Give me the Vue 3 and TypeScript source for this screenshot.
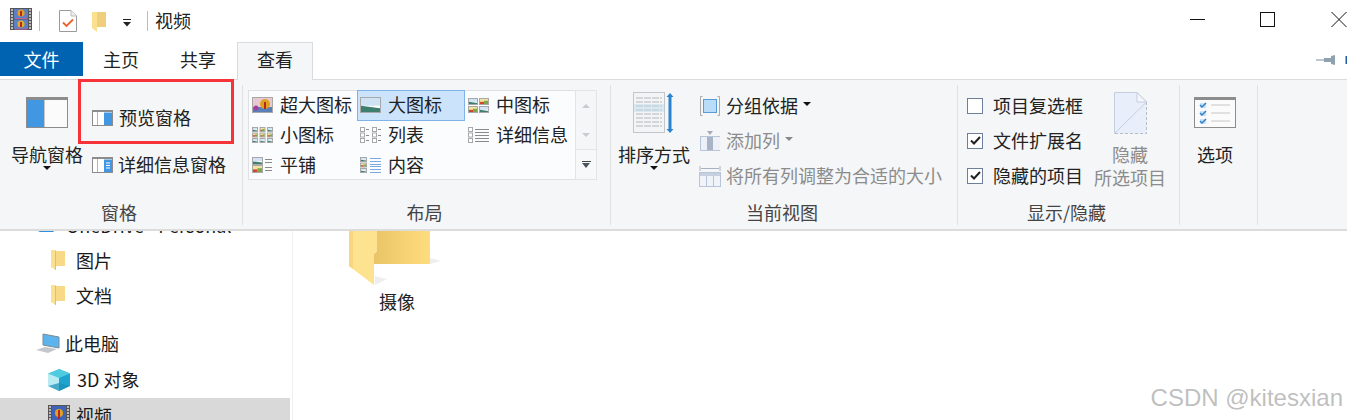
<script setup lang="ts">
// svg fragments, drawn in a 21x16 box unless noted
const pic = (x: number, y: number, w: number, h: number) =>
  `<rect x="${x + 0.5}" y="${y + 0.5}" width="${w - 1}" height="${h - 1}" fill="#fff" stroke="#a8a8a8"/>` +
  `<rect x="${x + 1}" y="${y + 1}" width="${w - 2}" height="${(h - 2) * 0.55}" fill="#cfe3f4"/>` +
  `<path d="M${x + 1} ${y + h * 0.55}L${x + w - 1} ${y + h * 0.7}V${y + h - 1}H${x + 1}Z" fill="#3f7f70"/>`;
const warm = (x: number, y: number, w: number, h: number) =>
  `<rect x="${x + 0.5}" y="${y + 0.5}" width="${w - 1}" height="${h - 1}" fill="#f1e3a0" stroke="#a8a8a8"/>` +
  `<rect x="${x + 1}" y="${y + h * 0.55}" width="${(w - 2) / 2}" height="${h * 0.45 - 1}" fill="#d2452f"/>` +
  `<rect x="${x + w / 2}" y="${y + h * 0.4}" width="${w / 2 - 1}" height="${h * 0.6 - 1}" fill="#7fa64a"/>`;
const lines = (x: number, ys: number[], w: number, c = "#8a8a8a") =>
  ys.map((y) => `<rect x="${x}" y="${y}" width="${w}" height="1" fill="${c}"/>`).join("");
const dots = (x: number) =>
  [0, 5.5, 11].map((y) => `<rect x="${x + 0.5}" y="${y + 0.5}" width="4" height="4" fill="#fff" stroke="#a8a8a8"/>`).join("");

const gallery = [
  {
    label: "超大图标",
    svg:
      '<rect x=".5" y=".5" width="20" height="15" fill="#e8c9d0" stroke="#a8a8a8"/><rect x="1" y="10" width="19" height="5" fill="#5a7fb8"/><circle cx="13" cy="7" r="5" fill="#e0a020"/><rect x="12" y="5" width="2" height="7" fill="#b8281e"/><circle cx="4" cy="11" r="2.5" fill="#a040a0"/>',
  },
  { label: "大图标", svg: pic(0, 0, 21, 16), active: true },
  { label: "中图标", svg: pic(0, 1, 10, 7) + warm(11, 1, 10, 7) + warm(0, 9, 10, 7) + pic(11, 9, 10, 7) },
  {
    label: "小图标",
    svg: [0, 7.5, 15]
      .map((x, i) => (i === 1 ? warm(x, 0, 6, 5) : pic(x, 0, 6, 5)) + warm(x, 5.5, 6, 5) + pic(x, 11, 6, 5))
      .join(""),
  },
  {
    label: "列表",
    svg: dots(0) + dots(12) + lines(6, [2, 8, 13], 3) + lines(18, [2, 8, 13], 3),
  },
  { label: "详细信息", svg: dots(0) + lines(7, [2, 5, 8, 11, 14], 14) },
  {
    label: "平铺",
    svg: pic(0, 0, 11, 8) + warm(0, 8, 11, 8) + lines(13, [2, 5, 10, 13], 7),
  },
  {
    label: "内容",
    svg:
      pic(0, 0, 7, 5) + warm(0, 5.5, 7, 5) + pic(0, 11, 7, 5) + lines(10, [1, 4, 7, 9, 12, 15], 11, "#7da7e0"),
  },
];

const sideRows = [
  { label: "OneDrive - Personal", indent: 36, gap: 8, kind: "cloud", partial: true },
  { label: "图片", indent: 51, gap: 11, kind: "folder" },
  { label: "文档", indent: 51, gap: 11, kind: "folder", spaced: true },
  { label: "此电脑", indent: 36, gap: 5, kind: "pc", pad: true },
  { label: "3D 对象", indent: 48, gap: 7, kind: "cube", pad: true },
  { label: "视频", indent: 48, gap: 6, kind: "film", selected: true },
];
</script>

<template>
  <div class="explorer">
    <div class="titlebar">
      <svg class="film" width="22" height="22" viewBox="0 0 22 22">
        <rect width="22" height="22" fill="#555" />
        <rect x="4" y="1" width="14" height="9.5" fill="#5d7fc4" />
        <rect x="4" y="11.5" width="14" height="9.5" fill="#5d7fc4" />
        <circle cx="11" cy="5" r="3.6" fill="#e0a020" />
        <circle cx="11" cy="16" r="3.6" fill="#d8b030" />
        <rect x="10" y="3" width="2" height="5" fill="#b8281e" />
        <rect x="10" y="14" width="2" height="5" fill="#b8281e" />
        <path d="M5 10.5h12M5 21h12" stroke="#c060a0" />
        <path d="M1 2h2M1 5h2M1 8h2M1 11h2M1 14h2M1 17h2M1 20h2M19 2h2M19 5h2M19 8h2M19 11h2M19 14h2M19 17h2M19 20h2" stroke="#ddd" stroke-width="1.4" />
      </svg>
      <span class="tsep first"></span>
      <svg class="qa-check" width="18" height="22" viewBox="0 0 18 22">
        <path d="M.5.5H12L17.5 6V21.5H.5Z" fill="#fff" stroke="#9a9a9a" />
        <path d="M12 .5V6h5.5" fill="#eee" stroke="#bbb" />
        <path d="M4 12.5l3.5 3.5L14 9.5" fill="none" stroke="#e8622c" stroke-width="1.8" />
      </svg>
      <svg class="qa-folder" width="15" height="21" viewBox="0 0 15 21">
        <path d="M4 1h10v15H4Z" fill="#efcf7c" />
        <path d="M0 1h5v20L0 17Z" fill="#fbe08f" />
      </svg>
      <svg class="qa-drop" width="10" height="8" viewBox="0 0 10 8">
        <rect x="1" y="0" width="8" height="1" fill="#222" />
        <path d="M1 3h8L5 7.5Z" fill="#222" />
      </svg>
      <span class="tsep second"></span>
      <span class="title">视频</span>
      <div class="winctl">
        <svg class="win-min" width="16" height="2" viewBox="0 0 16 2"><rect width="15" height="1" y="0" fill="#111" /></svg>
        <svg class="win-max" width="15" height="15" viewBox="0 0 15 15"><rect x=".5" y=".5" width="14" height="14" fill="none" stroke="#111" /></svg>
        <svg class="win-close" width="16" height="15" viewBox="0 0 16 15"><path d="M.5 0 15.5 15M15.5 0 .5 15" stroke="#111" /></svg>
      </div>
    </div>

    <div class="tabs">
      <span class="tab file">文件</span>
      <span class="tab">主页</span>
      <span class="tab share">共享</span>
      <span class="tab current">查看</span>
      <svg class="pin" width="31" height="10" viewBox="0 0 31 10">
        <path d="M0 5h9" stroke="#a9b4bc" stroke-width="1.5" />
        <path d="M8 3h7V1l4-1v10l-4-1V7H8Z" fill="#8fa2b0" />
        <rect x="29.5" y="1" width="1.5" height="8" fill="#1f5f9e" />
      </svg>
    </div>

    <div class="ribbon">
      <section class="group pane">
        <div class="group-body">
          <div class="large">
            <div class="large-icon">
              <svg class="nudge-15" width="42" height="31" viewBox="0 0 42 31">
                <rect x=".5" y=".5" width="41" height="30" fill="#fbfbfb" stroke="#8c8c8c" />
                <rect x="0" y="0" width="42" height="3" fill="#8c8c8c" />
                <rect x="1" y="3" width="17" height="27" fill="#4197e2" />
                <rect x="18" y="3" width="1" height="27" fill="#c7c7c7" />
              </svg>
            </div>
            <span>导航窗格</span>
            <i class="caret"></i>
          </div>
          <div class="small-col tall">
            <div class="small">
              <svg width="21" height="16" viewBox="0 0 21 16">
                <rect x=".5" y=".5" width="20" height="15" fill="#fff" stroke="#8c8c8c" />
                <rect x="0" y="0" width="21" height="2" fill="#8c8c8c" />
                <rect x="5" y="2" width="1" height="13" fill="#b5b5b5" />
                <rect x="12" y="2.5" width="8" height="12.5" fill="#4197e2" />
              </svg>
              <span>预览窗格</span>
            </div>
            <div class="small">
              <svg width="21" height="16" viewBox="0 0 21 16">
                <rect x=".5" y=".5" width="20" height="15" fill="#fff" stroke="#8c8c8c" />
                <rect x="0" y="0" width="21" height="2" fill="#8c8c8c" />
                <rect x="5" y="2" width="1" height="13" fill="#b5b5b5" />
                <rect x="12" y="2.5" width="8" height="12.5" fill="#4197e2" />
                <path d="M14 6h4M14 8.500h4M14 11h4" stroke="#fff" />
              </svg>
              <span class="tight">详细信息窗格</span>
            </div>
          </div>
        </div>
        <div class="group-label">窗格</div>
      </section>

      <section class="group layout">
        <div class="group-body">
          <div class="gallery">
            <div v-for="item in gallery" :key="item.label" class="cell" :class="{ active: item.active }">
              <svg width="21" height="16" viewBox="0 0 21 16" v-html="item.svg"></svg>
              <span>{{ item.label }}</span>
            </div>
          </div>
          <div class="spin">
            <div class="spin-cell"><i class="tri up"></i></div>
            <div class="spin-cell"><i class="tri down"></i></div>
            <div class="spin-cell more"><b></b><i class="tri dark"></i></div>
          </div>
        </div>
        <div class="group-label">布局</div>
      </section>

      <section class="group view">
        <div class="group-body">
          <div class="large">
            <div class="large-icon">
              <svg class="nudge-9" width="42" height="42" viewBox="0 0 42 42">
                <rect x=".5" y=".5" width="31" height="40" fill="#f2f4f5" stroke="#c2c6c8" />
                <path d="M3 6h26M3 10h26M3 14h26M3 18h26M3 22h26M3 26h26M3 30h26M3 34h26" stroke="#b4b8ba" stroke-dasharray="7 1" />
                <rect x="1" y="12" width="30" height="8" fill="#bcd9ee" opacity=".45" />
                <path d="M37 1l3.500 4h-2v32h2L37 41l-3.500-4h2V5h-2Z" fill="#2b83cf" />
              </svg>
            </div>
            <span>排序方式</span>
            <i class="caret"></i>
          </div>
          <div class="small-col short">
            <div class="small wide">
              <svg width="20" height="20" viewBox="0 0 20 20">
                <path d="M2.500.5h-2v19h2M17.500.5h2v19h-2" fill="none" stroke="#aaa" />
                <rect x="3.500" y="3.500" width="13" height="13" fill="#b9dcf8" stroke="#5b9bd5" />
              </svg>
              <span>分组依据</span>
              <i class="small-caret"></i>
            </div>
            <div class="small wide off">
              <svg width="20" height="20" viewBox="0 0 20 20">
                <rect x=".5" y="5.500" width="20" height="14" fill="#edf1f7" stroke="#b8c4d8" />
                <rect x="7" y="6" width="6" height="13" fill="#a8b3c8" />
                <path d="M7 0h6l-3 4Z" fill="#a8a8b8" />
              </svg>
              <span>添加列</span>
              <i class="small-caret grey"></i>
            </div>
            <div class="small wide off fit">
              <svg width="22" height="22" viewBox="0 0 22 22">
                <path d="M1 1v5M21 1v5M2 3.500h18" stroke="#a9b2c4" fill="none" />
                <rect x=".5" y="7.500" width="21" height="14" fill="#f0f3f8" stroke="#b8c4d8" />
                <rect x="1" y="8" width="20" height="3" fill="#c7d0e0" />
                <path d="M7.500 11v10M14.500 11v10" stroke="#b8c4d8" />
              </svg>
              <span>将所有列调整为合适的大小</span>
            </div>
          </div>
        </div>
        <div class="group-label">当前视图</div>
      </section>

      <section class="group show">
        <div class="group-body">
          <div class="small-col short checks">
            <label class="check"><i class="box"></i><span>项目复选框</span></label>
            <label class="check"><i class="box on"><svg width="11" height="9" viewBox="0 0 11 9"><path d="M1 4.500 4 7.500 10 1" fill="none" stroke="#222" stroke-width="2" /></svg></i><span>文件扩展名</span></label>
            <label class="check"><i class="box on"><svg width="11" height="9" viewBox="0 0 11 9"><path d="M1 4.500 4 7.500 10 1" fill="none" stroke="#222" stroke-width="2" /></svg></i><span>隐藏的项目</span></label>
          </div>
          <div class="large off hide">
            <div class="large-icon">
              <svg class="nudge-8" width="33" height="43" viewBox="0 0 33 43">
                <path d="M.5.500H23L32.500 10V41.500H.5Z" fill="#e8eefa" />
                <path d="M32.500 10V41.500H.5" fill="none" stroke="#b5bdcb" stroke-dasharray="3 2" />
                <path d="M.5 41.500V.5H23L32.500 10" fill="none" stroke="#c5cede" />
                <path d="M23 .5V10h9.500Z" fill="#f4f6fb" stroke="#c5cede" />
                <path d="M.5 41.500 32.500 10" stroke="#c5cede" />
              </svg>
            </div>
            <span>隐藏</span>
            <span>所选项目</span>
          </div>
        </div>
        <div class="group-label">显示/隐藏</div>
      </section>

      <section class="group options">
        <div class="group-body">
          <div class="large shift">
            <div class="large-icon">
              <svg class="nudge-15" width="42" height="31" viewBox="0 0 42 31">
                <rect x=".5" y=".5" width="41" height="30" fill="#fbfbfb" stroke="#8c8c8c" />
                <rect width="42" height="3" fill="#8c8c8c" />
                <rect x="6" y="6" width="6" height="5" fill="#cfe2f5" />
                <rect x="6" y="14" width="6" height="5" fill="#cfe2f5" />
                <rect x="6" y="22" width="6" height="5" fill="#cfe2f5" />
                <path d="M6 8l2 2 4-4M6 16l2 2 4-4M6 24l2 2 4-4" fill="none" stroke="#2b83cf" stroke-width="1.5" />
                <path d="M17 8h19M17 16h19M17 24h19" stroke="#c6c6c6" />
              </svg>
            </div>
            <span>选项</span>
          </div>
        </div>
      </section>
    </div>

    <div class="main">
      <nav class="sidebar">
        <div
          v-for="row in sideRows"
          :key="row.label"
          class="side-row"
          :class="{ partial: row.partial, selected: row.selected, spaced: row.spaced, pad: row.pad }"
          :style="{ paddingLeft: row.indent + 'px', gap: row.gap + 'px' }"
        >
          <svg v-if="row.kind === 'folder'" width="14" height="21" viewBox="0 0 14 21">
            <path d="M4 1h10v15H4Z" fill="#f8d988" />
            <path d="M0 0h5v20L0 17Z" fill="#fbe08f" />
            <path d="M4 1h1v19H4Z" fill="#e6bf60" />
          </svg>
          <svg v-else-if="row.kind === 'cloud'" width="22" height="16" viewBox="0 0 22 16">
            <path d="M5 14a4 4 0 0 1 0-8 6 6 0 0 1 11-1 5 5 0 0 1 1 9Z" fill="#2f8fdc" />
          </svg>
          <svg v-else-if="row.kind === 'pc'" width="24" height="21" viewBox="0 0 24 21">
            <path d="M7 1 23 4V15L7 12Z" fill="#5cb3ee" stroke="#7b8a96" />
            <path d="M0 17l9-3 12 2-9 4Z" fill="#c4c8cc" />
          </svg>
          <svg v-else-if="row.kind === 'cube'" width="22" height="22" viewBox="0 0 22 22">
            <path d="M11 0 22 4.500V17L11 22Z" fill="#1fa4cf" />
            <path d="M11 0 0 4.500V17L11 22Z" fill="#b8ecf2" />
            <path d="M0 4.500 11 9 22 4.500 11 0Z" fill="#4fcbe0" />
            <path d="M0 17 11 14 22 17 11 22Z" fill="#178fb8" opacity=".7" />
          </svg>
          <svg v-else-if="row.kind === 'film'" width="22" height="22" viewBox="0 0 22 22">
            <rect width="22" height="22" fill="#555" />
            <rect x="4" y="1" width="14" height="20" fill="#3f63b8" />
            <circle cx="11" cy="8" r="4" fill="#e0a020" />
            <rect x="10" y="5" width="2" height="9" fill="#b8281e" />
            <path d="M1 2h2M1 5h2M1 8h2M1 11h2M1 14h2M1 17h2M1 20h2M19 2h2M19 5h2M19 8h2M19 11h2M19 14h2M19 17h2M19 20h2" stroke="#ddd" stroke-width="1.4" />
          </svg>
          <span>{{ row.label }}</span>
        </div>
      </nav>
      <div class="files">
        <div class="file-item">
          <svg width="96" height="55" viewBox="0 0 96 55">
            <defs>
              <linearGradient id="back" x1="0" x2="1" y1="0" y2="0">
                <stop offset="0" stop-color="#eac468" />
                <stop offset="1" stop-color="#fedd7e" />
              </linearGradient>
            </defs>
            <path d="M81 33l11-3-11-3ZM26 54l12-6-12-3Z" fill="#eeeeee" />
            <path d="M28 0H81V33H25V23L28 20Z" fill="url(#back)" />
            <path d="M0 0H28V20L25 23V54L0 35Z" fill="#fde28f" />
            <path d="M0 0H4V38L0 35Z" fill="#f8d67e" />
          </svg>
          <span>摄像</span>
        </div>
      </div>
    </div>

    <div class="highlight"></div>
    <div class="watermark">CSDN @kitesxian</div>
  </div>
</template>

<style scoped>
.explorer {
  position: relative;
  width: 1347px;
  height: 420px;
  overflow: hidden;
  background: #fff;
  color: #222;
  font-family: "Noto Sans CJK SC", "Liberation Sans", sans-serif;
  font-size: 18px;
  line-height: 22px;
}
i {
  font-style: normal;
  display: block;
}

.titlebar {
  display: flex;
  align-items: center;
  height: 42px;
  padding-left: 10px;
}
.film {
  margin-top: -4px;
}
.tsep {
  width: 1px;
  height: 20px;
  background: #bdbdbd;
}
.tsep.first {
  margin-left: 7px;
}
.qa-check {
  margin-left: 19px;
}
.qa-folder {
  margin-left: 15px;
}
.qa-drop {
  margin-left: 15px;
  margin-top: 3px;
}
.tsep.second {
  margin-left: 15px;
}
.title {
  margin-left: 7px;
  margin-top: -3px;
}
.winctl {
  margin-left: auto;
  display: flex;
  align-items: center;
  margin-top: -3px;
}
.win-min {
  margin-right: 54px;
}
.win-max {
  margin-right: 56px;
}

.tabs {
  display: flex;
  align-items: flex-start;
  box-sizing: border-box;
  height: 38px;
  border-bottom: 1px solid #dadbdc;
}
.tab {
  width: 76px;
  height: 34px;
  line-height: 34px;
  text-align: center;
}
.tab.file {
  width: 83px;
  background: #0063b1;
  color: #fff;
}
.tab.share {
  width: 78px;
}
.tab.current {
  width: 76px;
  height: 38px;
  box-sizing: border-box;
  line-height: 33px;
  background: #f5f6f7;
  border: 1px solid #dadbdc;
  border-bottom: none;
}
.pin {
  margin-left: auto;
  margin-top: 13px;
}

.ribbon {
  display: flex;
  height: 149px;
  background: #f5f6f7;
  border-bottom: 2px solid #dcdcdc;
}
.group {
  box-sizing: border-box;
  height: 140px;
  margin-top: 5px;
  border-right: 1px solid #e1e2e3;
}
.group-body {
  display: flex;
  height: 116px;
}
.group-label {
  height: 22px;
  line-height: 22px;
  text-align: center;
  color: #444;
  padding-right: 4px;
}
.pane {
  width: 243px;
}
.pane .group-body {
  padding-left: 11px;
}
.layout {
  width: 368px;
}
.layout .group-body {
  padding: 5px 0 0 5px;
  box-sizing: border-box;
}
.view {
  width: 347px;
}
.view .group-body {
  padding-left: 7px;
}
.show {
  width: 222px;
}
.show .group-body {
  padding-left: 9px;
}
.options {
  width: 78px;
}

.large {
  display: flex;
  flex-direction: column;
  align-items: center;
  width: 72px;
  flex: none;
  padding-top: 5px;
  white-space: nowrap;
}
.large.shift {
  margin-left: -1px;
}
.large-icon {
  display: flex;
  align-items: flex-end;
  height: 53px;
}
.nudge-15 {
  margin-bottom: 15px;
}
.nudge-9 {
  margin-bottom: 9px;
}
.nudge-8 {
  margin-bottom: 8px;
}
.caret {
  margin-top: 1px;
  width: 0;
  height: 0;
  border-left: 4px solid transparent;
  border-right: 4px solid transparent;
  border-top: 4px solid #111;
}
.off {
  color: #8c8c8c;
}
.hide {
  margin-left: 11px;
}
.hide .large-icon + span {
  height: 23px;
}

.small-col {
  display: flex;
  flex-direction: column;
}
.small-col.tall {
  margin-left: 9px;
  padding-top: 16px;
  gap: 13px;
}
.small-col.short {
  margin-left: 10px;
  padding-top: 3px;
}
.small-col.checks {
  margin-left: 0;
}
.small {
  display: flex;
  align-items: center;
  gap: 6px;
  height: 34px;
  white-space: nowrap;
}
.small span,
.check span,
.side-row span {
  margin-bottom: 2px;
}
.small span.tight {
  margin-left: -1px;
}
.small.wide {
  height: 35px;
}
.small.fit {
  gap: 5px;
}
.small.fit svg {
  margin-left: -1px;
}
.small-caret {
  width: 0;
  height: 0;
  margin-left: -1px;
  margin-top: -4px;
  border-left: 4px solid transparent;
  border-right: 4px solid transparent;
  border-top: 4px solid #111;
}
.small-caret.grey {
  border-top-color: #888;
}
.check {
  display: flex;
  align-items: center;
  gap: 10px;
  height: 35px;
}
.box {
  box-sizing: border-box;
  display: flex;
  align-items: center;
  justify-content: center;
  width: 16px;
  height: 16px;
  background: #fff;
  border: 1px solid #6d7f9c;
}

.gallery {
  box-sizing: border-box;
  display: grid;
  grid-template-columns: 108px 108px 109px;
  grid-auto-rows: 30px;
  align-content: start;
  width: 327px;
  height: 90px;
  background: #fbfcfd;
  border: 1px solid #dfe0e1;
  border-right: none;
}
.cell {
  box-sizing: border-box;
  display: flex;
  align-items: center;
  gap: 7px;
  padding-left: 3px;
  padding-bottom: 2px;
  white-space: nowrap;
}
.cell span {
  margin-bottom: 2px;
}
.cell.active {
  background: #cce4fb;
  border: 1px solid #7fb2e6;
  padding-left: 2px;
  margin-top: -1px;
}
.spin {
  box-sizing: border-box;
  width: 22px;
  height: 90px;
  border: 1px solid #e3e4e5;
  display: flex;
  flex-direction: column;
}
.spin-cell {
  flex: 1;
  display: flex;
  flex-direction: column;
  align-items: center;
  justify-content: center;
  gap: 1px;
}
.spin-cell.more {
  background: #f7f8f9;
  border-top: 1px solid #e3e4e5;
}
.spin-cell b {
  width: 9px;
  height: 1px;
  background: #444;
}
.tri {
  width: 0;
  height: 0;
  border-left: 4px solid transparent;
  border-right: 4px solid transparent;
}
.tri.up {
  border-bottom: 4px solid #c8ccd0;
}
.tri.down {
  border-top: 4px solid #c8ccd0;
}
.tri.dark {
  border-top: 5px solid #4a5560;
}

.main {
  display: flex;
  height: 189px;
}
.sidebar {
  width: 292px;
  flex: none;
  overflow: hidden;
  border-right: 1px solid #f0f0f0;
}
.side-row {
  display: flex;
  align-items: center;
  height: 35px;
  margin-right: 2px;
  white-space: nowrap;
  color: #1a1a1a;
}
.side-row.partial {
  margin-top: -23px;
}
.side-row.spaced {
  margin-bottom: 13px;
}
.side-row.pad {
  margin-bottom: 1px;
}
.side-row.selected {
  background: #d9d9d9;
}
.files {
  padding-left: 56px;
}
.file-item {
  display: flex;
  flex-direction: column;
  width: 96px;
}
.file-item span {
  margin-top: 4px;
  text-align: center;
}

.highlight {
  position: absolute;
  left: 78px;
  top: 79px;
  width: 156px;
  height: 65px;
  box-sizing: border-box;
  border: 3px solid #f63338;
}
.watermark {
  position: absolute;
  right: 4px;
  top: 384px;
  font-family: "Liberation Sans", sans-serif;
  font-size: 24px;
  line-height: 28px;
  color: rgba(150, 150, 150, 0.62);
}
</style>
